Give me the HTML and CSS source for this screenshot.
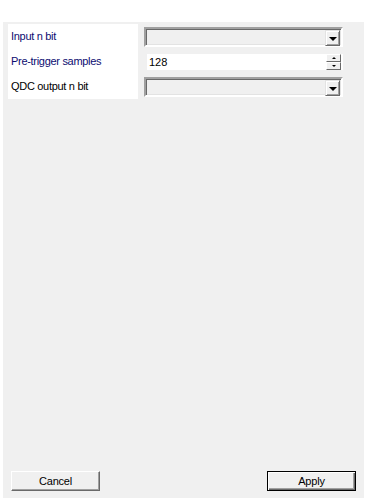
FILE: index.html
```html
<!DOCTYPE html>
<html>
<head>
<meta charset="utf-8">
<link rel="stylesheet" href="styles.css">
</head>
<body>
<div class="panel">
  <div class="form">
    <div class="labels">
      <div class="lbl blue">Input n bit</div>
      <div class="lbl blue">Pre-trigger samples</div>
      <div class="lbl">QDC output n bit</div>
    </div>
    <div class="controls">
      <div class="row">
        <div class="combo"><div class="combo-field"></div><div class="drop"><span class="tri"></span></div></div>
      </div>
      <div class="row">
        <div class="spin"><div class="spin-field">128</div><div class="spin-btns"><div class="sbtn"><span class="tri-up"></span></div><div class="sbtn"><span class="tri-down"></span></div></div></div>
      </div>
      <div class="row">
        <div class="combo"><div class="combo-field"></div><div class="drop"><span class="tri"></span></div></div>
      </div>
    </div>
  </div>
  <div class="spacer"></div>
  <div class="buttons">
    <div class="btn">Cancel</div>
    <div class="btn default">Apply</div>
  </div>
</div>
</body>
</html>
```
FILE: styles.css
```css
html, body { margin: 0; padding: 0; background: #ffffff; }
body { font-family: "Liberation Sans", Arial, sans-serif; font-size: 11px; color: #000; }
.panel {
  margin: 22px 0 0 3px;
  width: 361px;
  height: 476px;
  background: #f0f0f0;
  display: flex;
  flex-direction: column;
}
.form { display: flex; margin: 2px 0 0 5px; }
.labels { width: 127px; height: 75px; background: #fff; padding-left: 3px; display: flex; flex-direction: column; }
.lbl { height: 25px; line-height: 25px; font-family: "Liberation Sans", Arial, sans-serif; font-size: 11px; letter-spacing: -0.3px; color: #000; }
.lbl.blue { color: #0c0c70; }
.controls { margin-left: 6px; width: 199px; display: flex; flex-direction: column; }
.row { height: 25px; display: flex; align-items: flex-start; }
.row:first-child, .row:last-child { padding-top: 3px; height: 22px; }
.row:nth-child(2) { padding-top: 5px; height: 20px; }
.combo {
  width: 199px; height: 20px; box-sizing: border-box;
  border-top: 2px solid #a0a0a0; border-left: 2px solid #a0a0a0;
  border-bottom: 2px solid #ffffff; border-right: 2px solid #ffffff;
  box-shadow: inset 1px 1px 0 #696969, inset -1px -1px 0 #e3e3e3;
  background: #f0f0f0;
  display: flex; padding: 1px 1px 1px 0;
}
.combo-field { flex: 1; }
.drop {
  width: 15px; height: 16px; box-sizing: border-box; background: #f0f0f0;
  border-top: 1px solid #e3e3e3; border-left: 1px solid #e3e3e3;
  border-right: 1px solid #696969; border-bottom: 1px solid #696969;
  box-shadow: inset 1px 1px 0 #fff, inset -1px -1px 0 #a0a0a0;
  display: flex; align-items: center; justify-content: center;
}
.tri { width: 0; height: 0; border-left: 4px solid transparent; border-right: 4px solid transparent; border-top: 4px solid #000; margin-top: 1px; }
.spin { width: 197px; height: 16px; margin-left: 3px; display: flex; background: #fff; }
.spin-field { flex: 1; font-family: "Liberation Sans", Arial, sans-serif; font-size: 11px; line-height: 16px; padding-left: 2px; }
.spin-btns { width: 15px; display: flex; flex-direction: column; margin-right: 2px; }
.sbtn {
  height: 8px; box-sizing: border-box; background: #f0f0f0;
  border-top: 1px solid #fff; border-left: 1px solid #fff;
  border-right: 1px solid #696969; border-bottom: 1px solid #696969;
  display: flex; align-items: center; justify-content: center;
}
.tri-up { width: 0; height: 0; border-left: 2px solid transparent; border-right: 2px solid transparent; border-bottom: 2px solid #000; }
.tri-down { width: 0; height: 0; border-left: 2px solid transparent; border-right: 2px solid transparent; border-top: 2px solid #000; }
.spacer { flex: 1; }
.buttons { display: flex; justify-content: space-between; padding: 0 8px 7px 8px; }
.btn {
  width: 89px; height: 20px; box-sizing: border-box; background: #f0f0f0;
  border-top: 1px solid #fff; border-left: 1px solid #fff;
  border-right: 1px solid #696969; border-bottom: 1px solid #696969;
  box-shadow: inset -1px -1px 0 #a0a0a0;
  text-align: center; line-height: 18px;
  font-family: "Liberation Sans", Arial, sans-serif; font-size: 11px; letter-spacing: -0.2px;
}
.btn.default { border: 1px solid #000; box-shadow: inset 1px 1px 0 #fff, inset -1px -1px 0 #696969, inset -2px -2px 0 #a0a0a0; }
```
